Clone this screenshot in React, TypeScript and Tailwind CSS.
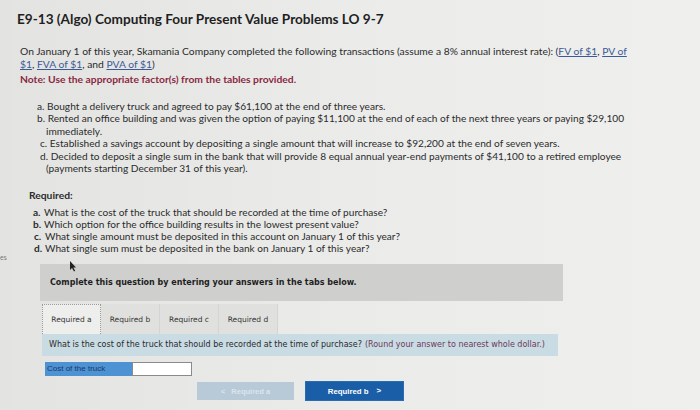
import React from "react";

const body = { fontFamily: 'Lato, "Liberation Sans", sans-serif' };
const verdana = { fontFamily: '"DejaVu Sans", Verdana, sans-serif' };

const facts = [
  { k: "a.", lines: ["Bought a delivery truck and agreed to pay $61,100 at the end of three years."], pad: "ml-[37px] pl-[9px] -indent-[9px]" },
  {
    k: "b.",
    lines: ["Rented an office building and was given the option of paying $11,100 at the end of each of the next three years or paying $29,100", "immediately."],
    pad: "ml-[37px] pl-[9px] -indent-[9px]",
  },
  { k: "c.", lines: ["Established a savings account by depositing a single amount that will increase to $92,200 at the end of seven years."], pad: "ml-[40px] pl-[6px] -indent-[6px]" },
  {
    k: "d.",
    lines: ["Decided to deposit a single sum in the bank that will provide 8 equal annual year-end payments of $41,100 to a retired employee", "(payments starting December 31 of this year)."],
    pad: "ml-[40px] pl-[6px] -indent-[6px]",
  },
];

const questions = [
  { k: "a.", t: "What is the cost of the truck that should be recorded at the time of purchase?" },
  { k: "b.", t: "Which option for the office building results in the lowest present value?" },
  { k: "c.", t: "What single amount must be deposited in this account on January 1 of this year?" },
  { k: "d.", t: "What single sum must be deposited in the bank on January 1 of this year?" },
];

const tabs = ["Required a", "Required b", "Required c", "Required d"];

function Link({ children }: { children: React.ReactNode }) {
  return <span className="text-[#3d5a96] underline">{children}</span>;
}

export default function App() {
  return (
    <div
      className="relative w-[700px] h-[410px] overflow-hidden bg-gradient-to-r from-[#e3e4e2] via-[#ebecea] to-[#eff0ee] text-[#2b2b2b]"
      style={body}
    >
      {/* clipped side nav text */}
      <div className="absolute left-0 top-[252px] text-[7px] text-[#777]">es</div>

      {/* mouse cursor */}
      <svg className="absolute left-[69px] top-[261px]" width="8" height="11" viewBox="0 0 8 11">
        <path d="M1 0 L1 9 L3 7 L5 10.5 L6.2 9.8 L4.3 6.6 L7 6.4 Z" fill="#222" />
      </svg>

      <h1 className="pl-[17px] pt-[9px] h-[29px] text-[13.6px] leading-[20px] font-bold text-[#1f1f1f]">
        E9-13 (Algo) Computing Four Present Value Problems LO 9-7
      </h1>

      <div className="pl-[20px] mt-[16px] text-[10.3px] leading-[13px] whitespace-nowrap">
        <p>
          On January 1 of this year, Skamania Company completed the following transactions (assume a 8% annual interest
          rate): (<Link>FV of $1</Link>, <Link>PV of</Link>
          <br />
          <Link>$1</Link>, <Link>FVA of $1</Link>, and <Link>PVA of $1</Link>)
        </p>
        <p className="mt-[2px] font-bold text-[#8a2842]">Note: Use the appropriate factor(s) from the tables provided.</p>
      </div>

      <ul className="mt-[14px] text-[10.15px] leading-[12.4px] whitespace-nowrap">
        {facts.map((f) => (
          <li key={f.k} className={f.pad}>
            {f.k} {f.lines[0]}
            {f.lines[1] && (
              <>
                <br />
                {f.lines[1]}
              </>
            )}
          </li>
        ))}
      </ul>

      <p className="mt-[15px] pl-[29px] text-[10.3px] leading-[13px] font-bold">Required:</p>

      <ul className="mt-[4px] pl-[33px] text-[10.1px] leading-[12px] whitespace-nowrap">
        {questions.map((q, i) => (
          <li key={q.k} className={`flex ${i >= 2 ? "pl-[1px]" : ""}`}>
            <span className="w-[11px] shrink-0 font-bold">{q.k}</span>
            <span>{q.t}</span>
          </li>
        ))}
      </ul>

      <div className="ml-[40px] mt-[10px] w-[523px] h-[37px] bg-[#cfd0ce] flex items-center pl-[10px] pt-[1px]" style={verdana}>
        <span className="text-[8px] font-bold text-[#1e1e1e] whitespace-nowrap">
          Complete this question by entering your answers in the tabs below.
        </span>
      </div>

      <div className="ml-[42px] mt-[3px] flex h-[30px]" style={verdana}>
        {tabs.map((t, i) => (
          <div
            key={t}
            className={`w-[59px] flex items-center justify-center text-[7.5px] text-[#333] whitespace-nowrap ${
              i === 0
                ? "bg-[#eeefed] border-t border-l border-r border-dotted border-[#9a9a9a]"
                : "bg-[#e0e1df] border-r border-[#d4d5d3]"
            }`}
          >
            {t}
          </div>
        ))}
      </div>

      <div className="ml-[42px] w-[516px] h-[22px] bg-[#c9dbe3] flex items-center pl-[7px] text-[8px] whitespace-nowrap" style={verdana}>
        <span className="text-[#2a2a2a]">What is the cost of the truck that should be recorded at the time of purchase?</span>
        <span className="ml-[3px] text-[#6b3a5a]">(Round your answer to nearest whole dollar.)</span>
      </div>

      <div className="ml-[45px] mt-[6px] flex h-[14px]">
        <div
          className="w-[87px] bg-[#4d92d3] text-[#1c3768] text-[8px] flex items-center pl-[2px] whitespace-nowrap"
          style={{ fontFamily: '"Liberation Sans", Arial, sans-serif' }}
        >
          Cost of the truck
        </div>
        <div className="w-[60px] bg-white border border-[#8a8a8a]" />
      </div>

      <div className="ml-[197px] mt-[6px] flex gap-[12px] h-[18px]" style={{ fontFamily: '"Liberation Sans", Arial, sans-serif' }}>
        <div className="w-[97px] bg-[#b8cad7] flex items-center justify-center gap-[6px] text-[7.5px] font-bold text-[#dbe5ec]">
          <span>&lt;</span>
          <span>Required a</span>
        </div>
        <div className="w-[97px] bg-[#1b5ea8] flex items-center justify-center gap-[8px] text-[7.8px] font-bold text-white shadow-[0_0_0_1px_#2a6cb4]">
          <span>Required b</span>
          <span className="text-[8px]">&gt;</span>
        </div>
      </div>
    </div>
  );
}
